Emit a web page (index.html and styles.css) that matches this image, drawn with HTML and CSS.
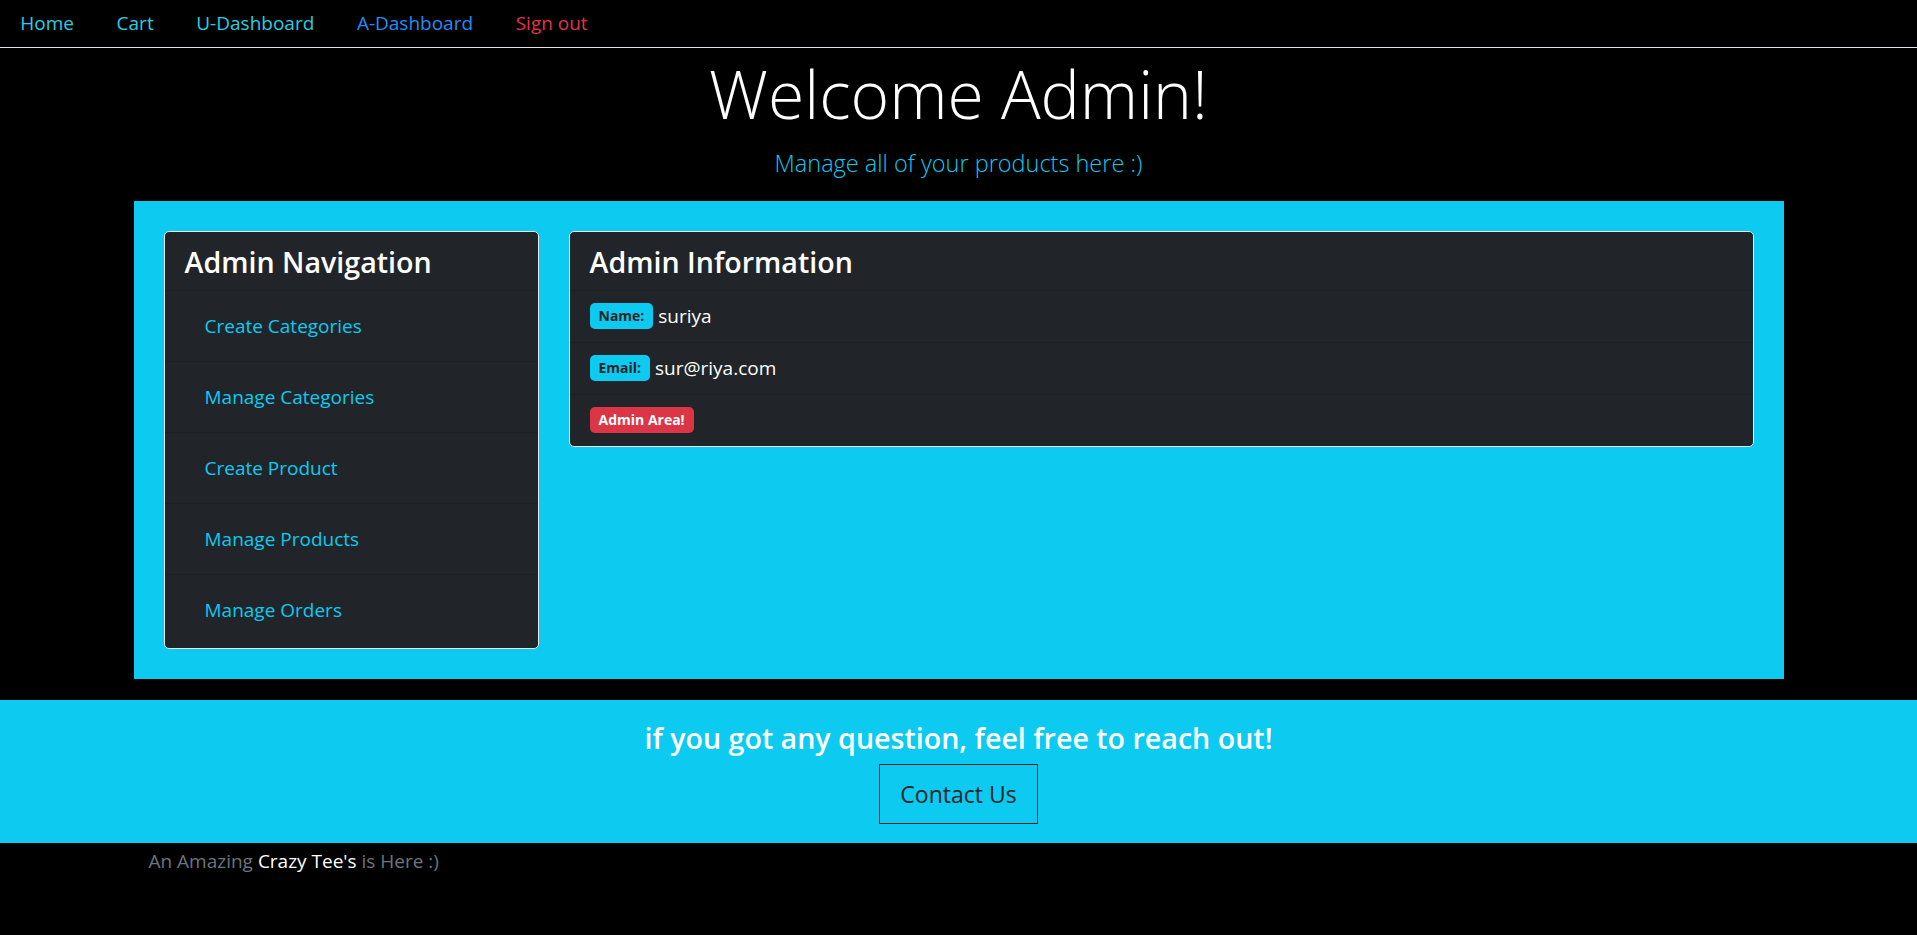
FILE: index.html
```html
<!DOCTYPE html>
<html lang="en">
<head>
<meta charset="utf-8">
<title>Admin Dashboard</title>
<link rel="stylesheet" href="styles.css">
</head>
<body>
<nav class="topnav">
  <ul class="nav-list">
    <li><a class="nav-link link-home" href="#">Home</a></li>
    <li><a class="nav-link link-home" href="#">Cart</a></li>
    <li><a class="nav-link link-home" href="#">U-Dashboard</a></li>
    <li><a class="nav-link link-active" href="#">A-Dashboard</a></li>
    <li><a class="nav-link link-danger" href="#">Sign out</a></li>
  </ul>
</nav>

<header class="hero">
  <h2 class="hero-title">Welcome Admin!</h2>
  <p class="hero-lead">Manage all of your products here :)</p>
</header>

<main class="panel">
  <section class="card">
    <div class="card-header"><h4 class="card-title">Admin Navigation</h4></div>
    <ul class="list list-nav">
      <li class="list-item"><a class="list-link" href="#">Create Categories</a></li>
      <li class="list-item"><a class="list-link" href="#">Manage Categories</a></li>
      <li class="list-item"><a class="list-link" href="#">Create Product</a></li>
      <li class="list-item"><a class="list-link" href="#">Manage Products</a></li>
      <li class="list-item"><a class="list-link" href="#">Manage Orders</a></li>
    </ul>
  </section>
  <section class="card">
    <div class="card-header"><h4 class="card-title">Admin Information</h4></div>
    <ul class="list">
      <li class="list-item info-item"><span class="badge badge-info">Name:</span> suriya</li>
      <li class="list-item info-item"><span class="badge badge-info">Email:</span> sur@riya.com</li>
      <li class="list-item info-item"><span class="badge badge-danger">Admin Area!</span></li>
    </ul>
  </section>
</main>

<footer class="footer">
  <div class="footer-band">
    <h4 class="footer-title">if you got any question, feel free to reach out!</h4>
    <button class="btn-contact" type="button">Contact Us</button>
  </div>
  <div class="footer-note">
    <span class="muted">An Amazing <span class="brand">Crazy Tee's</span> is Here :)</span>
  </div>
</footer>
</body>
</html>
```

FILE: styles.css
```css
* { box-sizing: border-box; }

html, body {
  margin: 0;
  padding: 0;
  background: #000;
  font-family: "Open Sans", "Noto Sans", sans-serif;
  color: #fff;
  height: 100%;
}

a { text-decoration: none; }

.topnav {
  border-bottom: 1px solid #dee2e6;
  height: 48px;
}

.nav-list {
  list-style: none;
  margin: 0 0 0 -1px;
  padding: 0;
  display: flex;
}

.nav-link {
  display: block;
  padding: 0 21.3px;
  line-height: 47px;
  font-size: 19px;
}

.link-home { color: #27cfe4; }
.link-active { color: #1e8ffa; }
.link-danger { color: #e23448; }

.hero {
  text-align: center;
  padding-top: 3px;
}

.hero-title {
  margin: 0 0 10px;
  font-size: 66px;
  font-weight: 300;
  line-height: 84px;
  color: #fff;
}

.hero-lead {
  margin: 0 0 19px;
  font-size: 23.5px;
  font-weight: 300;
  line-height: 37px;
  color: #0dcaf0;
}

.panel {
  width: 1650px;
  margin: 0 auto;
  background: #0dcaf0;
  padding: 30px;
  display: grid;
  grid-template-columns: 375px 1fr;
  gap: 30px;
  align-items: start;
}

.card {
  background: #212529;
  border: 1px solid #e6e8ea;
  border-radius: 5px;
  overflow: hidden;
}

.card-header {
  padding: 11px 20px 10px;
  border-bottom: 1px solid #1c1f23;
}

.card-title {
  margin: 0;
  font-size: 28.6px;
  font-weight: 600;
  line-height: 37px;
  color: #fff;
}

.list {
  list-style: none;
  margin: 0;
  padding: 0;
}

.list-nav { padding-bottom: 3px; }

.list-item {
  padding: 10px 20px;
  border-bottom: 1px solid #1c1f23;
  font-size: 19px;
  line-height: 30px;
  color: #fff;
}

.list-item:last-child { border-bottom: 0; }

.list-link {
  display: block;
  padding: 10px 20px;
  color: #0dcaf0;
}

.info-item {
  padding-top: 10px;
  padding-bottom: 10px;
  line-height: 31px;
}

.badge {
  display: inline-block;
  font-size: 14px;
  font-weight: 700;
  line-height: 1;
  padding: 6px 9px;
  border-radius: 5px;
  vertical-align: 2px;
}

.badge-info { background: #0dcaf0; color: #212529; }
.badge-danger { background: #dc3545; color: #fff; }

.footer { margin-top: 21px; }

.footer-band {
  background: #0dcaf0;
  text-align: center;
  padding: 20px 0 19px;
}

.footer-title {
  margin: 0 0 8px;
  font-size: 28.6px;
  font-weight: 600;
  line-height: 36px;
  color: #fff;
}

.btn-contact {
  font-family: inherit;
  background: transparent;
  border: 1px solid #212529;
  border-radius: 0;
  color: #212529;
  font-size: 23px;
  font-weight: 400;
  line-height: 38px;
  padding: 10px 20px;
}

.footer-note {
  width: 1650px;
  margin: 0 auto;
  padding: 3px 15px 0;
  font-size: 19px;
  line-height: 30px;
}

.muted { color: #6c757d; }
.brand { color: #fff; }
```
